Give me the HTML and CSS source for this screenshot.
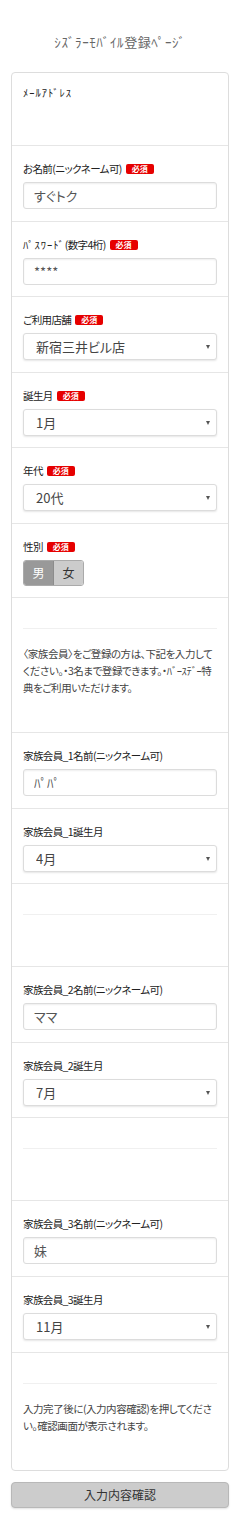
FILE: index.html
```html
<!DOCTYPE html>
<html>
  <head>
    <meta charset="utf-8">
    <title>ｼｽﾞﾗｰﾓﾊﾞｲﾙ登録ﾍﾟｰｼﾞ</title>
    <link rel="stylesheet" href="styles.css">
  </head>
  <body>
    <h1 class="page-title">ｼｽﾞﾗｰﾓﾊﾞｲﾙ登録ﾍﾟｰｼﾞ</h1>
    <form class="entry-form">
      <ul class="form-list">
        <li class="form-item email-item">
          <label class="field-label"><span class="hw">ﾒｰﾙｱﾄﾞﾚｽ</span></label>
        </li>
        <li class="form-item">
          <label class="field-label">お名前(ニックネーム可)<span class="required">必須</span></label>
          <input class="text-input" type="text" value="すぐトク">
        </li>
        <li class="form-item">
          <label class="field-label"><span class="hw">ﾊﾟｽﾜｰﾄﾞ</span>(数字4桁)<span class="required">必須</span></label>
          <input class="text-input" type="text" value="****">
        </li>
        <li class="form-item">
          <label class="field-label">ご利用店舗<span class="required">必須</span></label>
          <div class="select-box">
            <select><option>新宿三井ビル店</option></select>
          </div>
        </li>
        <li class="form-item">
          <label class="field-label">誕生月<span class="required">必須</span></label>
          <div class="select-box">
            <select><option>1月</option></select>
          </div>
        </li>
        <li class="form-item">
          <label class="field-label">年代<span class="required">必須</span></label>
          <div class="select-box">
            <select><option>20代</option></select>
          </div>
        </li>
        <li class="form-item gender-item">
          <label class="field-label">性別<span class="required">必須</span></label>
          <div class="gender-toggle">
            <span class="toggle-btn active">男</span><span class="toggle-btn">女</span>
          </div>
        </li>
        <li class="form-item note-item">
          <hr class="soft-rule">
          <p class="note-text">〈家族会員〉をご登録の方は、下記を入力してください。・3名まで登録できます。・ﾊﾞｰｽﾃﾞｰ特典をご利用いただけます。</p>
        </li>

        <!-- family member 1 -->
        <li class="form-item">
          <label class="field-label">家族会員_1名前(ニックネーム可)</label>
          <input class="text-input" type="text" value="ﾊﾟﾊﾟ">
        </li>
        <li class="form-item">
          <label class="field-label">家族会員_1誕生月</label>
          <div class="select-box">
            <select><option>4月</option></select>
          </div>
        </li>
        <li class="form-item note-item">
          <hr class="soft-rule">
          <div class="spacer"></div>
        </li>

        <!-- family member 2 -->
        <li class="form-item">
          <label class="field-label">家族会員_2名前(ニックネーム可)</label>
          <input class="text-input" type="text" value="ママ">
        </li>
        <li class="form-item">
          <label class="field-label">家族会員_2誕生月</label>
          <div class="select-box">
            <select><option>7月</option></select>
          </div>
        </li>
        <li class="form-item note-item">
          <hr class="soft-rule">
          <div class="spacer"></div>
        </li>

        <!-- family member 3 -->
        <li class="form-item">
          <label class="field-label">家族会員_3名前(ニックネーム可)</label>
          <input class="text-input" type="text" value="妹">
        </li>
        <li class="form-item">
          <label class="field-label">家族会員_3誕生月</label>
          <div class="select-box">
            <select><option>11月</option></select>
          </div>
        </li>
        <li class="form-item note-item">
          <hr class="soft-rule">
          <p class="note-text">入力完了後に(入力内容確認)を押してください。確認画面が表示されます。</p>
        </li>
      </ul>
      <button class="submit-btn" type="button">入力内容確認</button>
    </form>
  </body>
</html>
```

FILE: styles.css
```css
body {
  margin: 0;
  padding: 0 11px 15px;
  background: #ffffff;
  color: #222222;
  font-family: "Noto Sans CJK JP", "Noto Sans", sans-serif;
  font-feature-settings: "palt";
}

.page-title {
  margin: 0;
  padding: 33px 0 21px;
  font-size: 13px;
  line-height: 18px;
  letter-spacing: 0.6px;
  font-weight: normal;
  text-align: center;
  color: #666666;
}

.form-list {
  list-style: none;
  margin: 0;
  padding: 0;
  border: 1px solid #dddddd;
  border-radius: 4px;
}

.form-item {
  padding: 15px 11px 11.6px;
  border-bottom: 1px solid #e6e6e6;
}

.form-item:last-child {
  border-bottom: none;
}

.email-item {
  padding: 12px 11px 0;
  height: 60px;
}

.field-label {
  display: block;
  margin-bottom: 5px;
  font-size: 10.5px;
  line-height: 16px;
  letter-spacing: -0.6px;
  color: #222222;
}

.hw {
  letter-spacing: 1px;
}

.required {
  display: inline-block;
  margin-left: 4px;
  padding: 0 6px;
  height: 10px;
  line-height: 10px;
  font-size: 8px;
  font-weight: bold;
  letter-spacing: 0;
  color: #ffffff;
  background-color: #e60000;
  border-radius: 2px;
  vertical-align: 1px;
}

.text-input,
.select-box select {
  display: block;
  width: 100%;
  height: 27px;
  box-sizing: border-box;
  margin: 0;
  padding: 0 10px;
  border: 1px solid #dcdcdc;
  border-radius: 3px;
  background-color: #ffffff;
  font-family: "Noto Sans CJK JP", "Noto Sans", sans-serif;
  font-feature-settings: "palt";
  font-size: 13px;
  color: #555555;
  outline: none;
}

.text-input {
  box-shadow: inset 0 1px 2px rgba(0, 0, 0, 0.07);
}

.select-box {
  position: relative;
}

.select-box select {
  padding-left: 12px;
  color: #444444;
  appearance: none;
  -webkit-appearance: none;
  box-shadow: 0 1px 2px rgba(0, 0, 0, 0.1);
}

.select-box::after {
  content: "";
  position: absolute;
  right: 7px;
  top: 12px;
  border-left: 2.5px solid transparent;
  border-right: 2.5px solid transparent;
  border-top: 4px solid #555555;
}

.gender-item {
  padding-bottom: 11px;
}

.gender-item .field-label {
  margin-bottom: 4px;
}

.gender-toggle {
  display: inline-flex;
  border: 1px solid #aaaaaa;
  border-radius: 3px;
  overflow: hidden;
}

.toggle-btn {
  width: 29px;
  height: 24px;
  line-height: 24px;
  text-align: center;
  font-size: 12px;
  color: #333333;
  background-color: #cccccc;
}

.toggle-btn.active {
  color: #ffffff;
  background-color: #999999;
  border-right: 1px solid #8c8c8c;
}

.note-item {
  padding: 15px 11px 12px;
}

.soft-rule {
  margin: 15px 0 16px;
  border: 0;
  border-top: 1px solid #f0f0f0;
}

.note-text {
  margin: 0 0 24px;
  font-size: 10.5px;
  line-height: 17px;
  letter-spacing: -0.45px;
  color: #444444;
}

.spacer {
  height: 23px;
}

.submit-btn {
  display: block;
  width: 100%;
  height: 26px;
  margin-top: 11px;
  border: 1px solid #b8b8b8;
  border-radius: 4px;
  background-color: #cccccc;
  font-family: "Noto Sans CJK JP", "Noto Sans", sans-serif;
  font-size: 12px;
  color: #333333;
  box-shadow: 0 1px 2px rgba(0, 0, 0, 0.12);
}
```
